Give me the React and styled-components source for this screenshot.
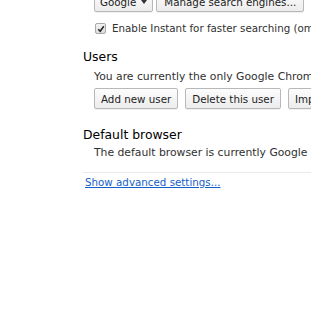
import React from "react";
import styled, { createGlobalStyle } from "styled-components";

const Global = createGlobalStyle`
  html, body { margin: 0; padding: 0; background: #fff; overflow: hidden; }
  body { font-family: "DejaVu Sans", Verdana, sans-serif; color: #303030; }
`;

const Page = styled.div`
  width: 311px;
  height: 320px;
  overflow: hidden;
  padding-left: 83px;
  box-sizing: border-box;
`;

const Section = styled.section`
  margin-top: ${(p) => p.$top || 0}px;
`;

const Heading = styled.h3`
  margin: 0;
  font-size: 12.4px;
  line-height: 16px;
  font-weight: normal;
  color: #000;
  white-space: nowrap;
`;

const Body = styled.div`
  padding-left: 11px;
`;

const Text = styled.div`
  font-size: 10.8px;
  line-height: 14px;
  white-space: nowrap;
  margin-top: ${(p) => p.$top || 0}px;
`;

const ButtonRow = styled.div`
  display: flex;
  gap: ${(p) => p.$gap || 6}px;
  margin-top: ${(p) => p.$top || 0}px;
  white-space: nowrap;
`;

const Button = styled.button`
  flex: none;
  height: 21px;
  padding: 0 ${(p) => p.$pad || 6}px;
  font-family: "DejaVu Sans", Verdana, sans-serif;
  font-size: 10.3px;
  color: #222;
  border: 1px solid #b8b8b8;
  border-radius: 2px;
  background: linear-gradient(#fdfdfd, #ececec);
  box-shadow: 0 1px 0 rgba(0, 0, 0, 0.06);
  display: inline-flex;
  align-items: center;
  gap: 5px;
`;

const CheckRow = styled.label`
  display: flex;
  align-items: center;
  gap: 6px;
  margin-top: ${(p) => p.$top || 0}px;
  padding-left: 1px;
  font-size: 10.3px;
  line-height: 14px;
  white-space: nowrap;
`;

const Box = styled.span`
  flex: none;
  width: 9px;
  height: 9px;
  margin-top: 1px;
  border: 1px solid #a9a9a9;
  border-radius: 2px;
  background: linear-gradient(#f4f4f4, #dcdcdc);
  display: inline-flex;
  align-items: center;
  justify-content: center;
`;

const Separator = styled.hr`
  margin: ${(p) => p.$top || 0}px 0 0 -1px;
  border: 0;
  border-top: 1px solid #eaeaea;
  height: 0;
`;

const Link = styled.a`
  display: block;
  margin-top: ${(p) => p.$top || 0}px;
  padding-left: 2px;
  font-size: 10.3px;
  line-height: 14px;
  color: #1560c8;
  text-decoration: underline;
  white-space: nowrap;
`;

export default function App() {
  return (
    <>
      <Global />
      <Page>
        <Section $top={-9}>
          <Body>
            <ButtonRow $gap={3}>
              <Button $pad={5}>
                Google
                <svg width="6" height="4" viewBox="0 0 6 4">
                  <path d="M0 0h6L3 4z" fill="#333" />
                </svg>
              </Button>
              <Button $pad={7}>Manage search engines...</Button>
            </ButtonRow>
            <CheckRow $top={9}>
              <Box>
                <svg width="8" height="8" viewBox="0 0 8 8">
                  <path d="M1.3 4.3L3.2 6.3L6.8 1.2" fill="none" stroke="#222" strokeWidth="1.5" />
                </svg>
              </Box>
              Enable Instant for faster searching (omnibox input may be logged)
            </CheckRow>
          </Body>
        </Section>
        <Section $top={14}>
          <Heading>Users</Heading>
          <Body>
            <Text $top={5}>You are currently the only Google Chrome user.</Text>
            <ButtonRow $top={4} $gap={7}>
              <Button>Add new user</Button>
              <Button>Delete this user</Button>
              <Button>Import bookmarks and settings...</Button>
            </ButtonRow>
          </Body>
        </Section>
        <Section $top={18}>
          <Heading>Default browser</Heading>
          <Body>
            <Text $top={3}>The default browser is currently Google Chrome.</Text>
          </Body>
        </Section>
        <Separator $top={12} />
        <Link href="#" $top={2}>Show advanced settings...</Link>
      </Page>
    </>
  );
}
